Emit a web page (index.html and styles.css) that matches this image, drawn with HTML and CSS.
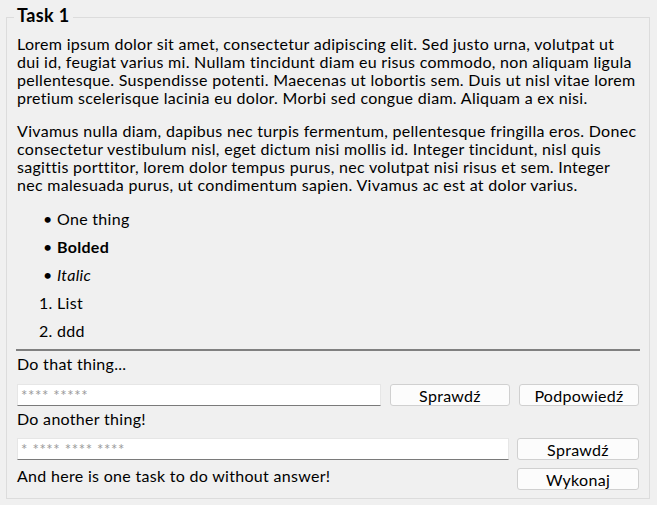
FILE: index.html
```html
<!DOCTYPE html>
<html>
<head>
<meta charset="utf-8">
<link rel="stylesheet" href="styles.css">
</head>
<body>
<fieldset class="task">
  <legend class="task-title">Task 1</legend>
  <p class="para">Lorem ipsum dolor sit amet, consectetur adipiscing elit. Sed justo urna, volutpat ut dui id, feugiat varius mi. Nullam tincidunt diam eu risus commodo, non aliquam ligula pellentesque. Suspendisse potenti. Maecenas ut lobortis sem. Duis ut nisl vitae lorem pretium scelerisque lacinia eu dolor. Morbi sed congue diam. Aliquam a ex nisi.</p>
  <p class="para">Vivamus nulla diam, dapibus nec turpis fermentum, pellentesque fringilla eros. Donec consectetur vestibulum nisl, eget dictum nisi mollis id. Integer tincidunt, nisl quis sagittis porttitor, lorem dolor tempus purus, nec volutpat nisi risus et sem. Integer nec malesuada purus, ut condimentum sapien. Vivamus ac est at dolor varius.</p>
  <ul class="list bullets">
    <li>One thing</li>
    <li><b>Bolded</b></li>
    <li><i>Italic</i></li>
  </ul>
  <ol class="list numbers">
    <li>List</li>
    <li>ddd</li>
  </ol>
  <hr class="rule">
  <div class="label first">Do that thing...</div>
  <div class="row row-a">
    <input class="field" type="text" placeholder="**** *****">
    <button class="btn">Sprawdź</button>
    <button class="btn">Podpowiedź</button>
  </div>
  <div class="label second">Do another thing!</div>
  <div class="row row-b">
    <input class="field" type="text" placeholder="* **** **** ****">
    <button class="btn wide">Sprawdź</button>
  </div>
  <div class="row row-c">
    <div class="label grow">And here is one task to do without answer!</div>
    <button class="btn wide">Wykonaj</button>
  </div>
</fieldset>
</body>
</html>
```
FILE: styles.css
```css
html, body {
  margin: 0;
  padding: 0;
  background: #f0f0f0;
}
body {
  font-family: "Lato", "Noto Sans", sans-serif;
  font-size: 16px;
  letter-spacing: 0.3px;
  line-height: 18px;
  color: #000;
}
.task {
  margin: 4px 7px 0 6px;
  padding: 5px 9px 8px 10px;
  border: 1px solid #dcdcdc;
  min-width: 0;
}
.task-title {
  font-size: 18px;
  font-weight: bold;
  letter-spacing: 0.4px;
  line-height: 22px;
  padding: 0 3px 4px 3px;
  margin-left: -3px;
}
.para {
  margin: 0 0 15px 0;
}
.list {
  margin: 0;
  padding-left: 40px;
}
.bullets li::marker {
  content: "\2022  ";
}
.bullets {
  margin-top: 16px;
}
.list li + li,
.numbers {
  margin-top: 10px;
}
.rule {
  margin: 9px 0 0 -1px;
  border: 0;
  height: 2px;
  background: #808080;
}
.label {
  line-height: 18px;
}
.label.first {
  margin-top: 4px;
}
.row {
  display: flex;
  align-items: center;
  gap: 9px;
  padding-right: 1px;
}
.row-a {
  margin-top: 11px;
  gap: 9px;
}
.label.second {
  margin-top: 4px;
}
.row-b {
  margin-top: 10px;
  gap: 8px;
}
.row-c {
  margin-top: 7px;
  gap: 8px;
  align-items: flex-start;
}
.row-c .btn {
  margin-top: 1px;
}
.grow {
  flex: 1;
}
.field {
  flex: 1;
  min-width: 0;
  height: 22px;
  box-sizing: border-box;
  margin: 0;
  padding: 0 3px;
  border: 1px solid #e6e6e6;
  border-bottom: 1px solid #7a7a7a;
  background: #fff;
  font-family: "Lato", sans-serif;
  font-size: 15px;
  letter-spacing: 0.6px;
  outline: none;
}
.field::placeholder {
  color: #9a9a9a;
}
.btn {
  width: 120px;
  height: 22px;
  box-sizing: border-box;
  margin: 0;
  padding: 0;
  border: 1px solid #d0d0d0;
  border-radius: 3px;
  background: #fcfcfc;
  font-family: "Lato", sans-serif;
  font-size: 16px;
  letter-spacing: 0.3px;
  color: #000;
}
.btn.wide {
  width: 122px;
}
```
